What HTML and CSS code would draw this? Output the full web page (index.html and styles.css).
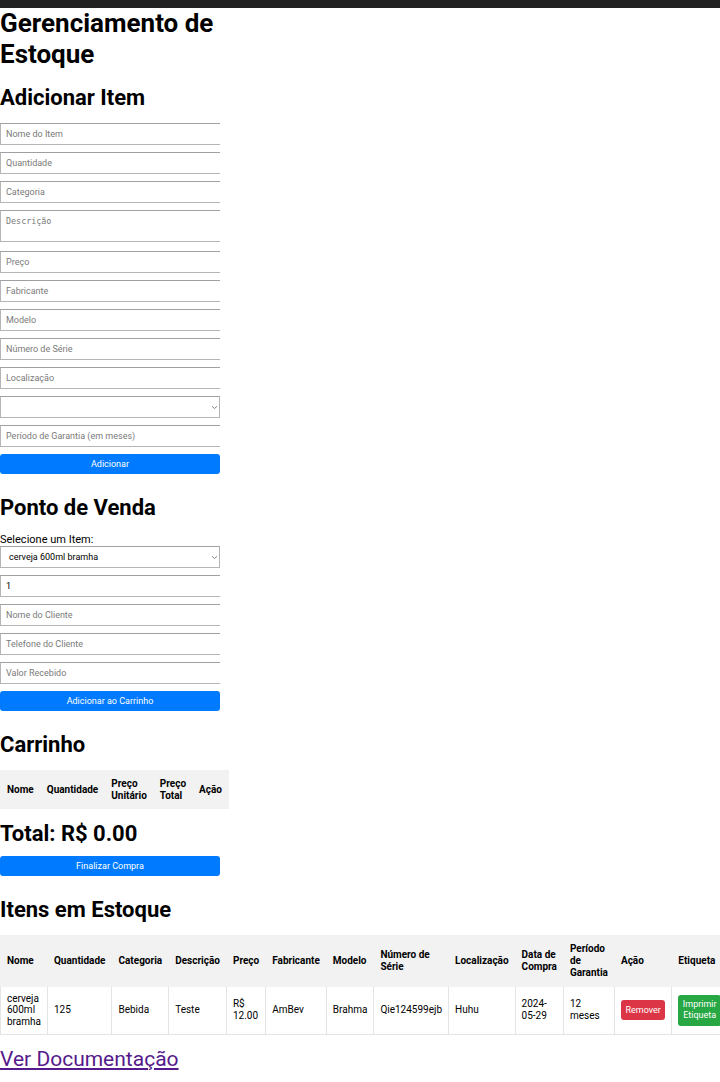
FILE: index.html
```html
<!DOCTYPE html>
<html lang="pt-BR">
<head>
<meta charset="utf-8">
<title>Gerenciamento de Estoque</title>
<link rel="stylesheet" href="styles.css">
</head>
<body>
<div class="topbar"></div>
<main class="page">
  <h1 class="title">Gerenciamento de<br>Estoque</h1>

  <h2 class="section">Adicionar Item</h2>
  <form class="form">
    <input class="field" type="text" placeholder="Nome do Item">
    <input class="field" type="text" placeholder="Quantidade">
    <input class="field" type="text" placeholder="Categoria">
    <textarea class="field area" placeholder="Descrição"></textarea>
    <input class="field" type="text" placeholder="Preço">
    <input class="field" type="text" placeholder="Fabricante">
    <input class="field" type="text" placeholder="Modelo">
    <input class="field" type="text" placeholder="Número de Série">
    <input class="field" type="text" placeholder="Localização">
    <div class="field select"><span class="select-text"></span><svg class="chev" width="7" height="5" viewBox="0 0 7 5"><path d="M1 1.2 L3.5 3.6 L6 1.2" fill="none" stroke="#777" stroke-width="0.9"/></svg></div>
    <input class="field" type="text" placeholder="Período de Garantia (em meses)">
    <button class="btn btn-blue" type="button">Adicionar</button>
  </form>

  <h2 class="section">Ponto de Venda</h2>
  <form class="form">
    <label class="label">Selecione um Item:</label>
    <div class="field select"><span class="select-text">cerveja 600ml bramha</span><svg class="chev" width="7" height="5" viewBox="0 0 7 5"><path d="M1 1.2 L3.5 3.6 L6 1.2" fill="none" stroke="#777" stroke-width="0.9"/></svg></div>
    <input class="field" type="text" value="1">
    <input class="field" type="text" placeholder="Nome do Cliente">
    <input class="field" type="text" placeholder="Telefone do Cliente">
    <input class="field" type="text" placeholder="Valor Recebido">
    <button class="btn btn-blue" type="button">Adicionar ao Carrinho</button>
  </form>

  <h2 class="section">Carrinho</h2>
  <table class="table cart">
    <thead>
      <tr><th>Nome</th><th>Quantidade</th><th>Preço<br>Unitário</th><th>Preço<br>Total</th><th>Ação</th></tr>
    </thead>
    <tbody></tbody>
  </table>
  <h2 class="section total">Total: R$ 0.00</h2>
  <button class="btn btn-blue" type="button">Finalizar Compra</button>

  <h2 class="section">Itens em Estoque</h2>
  <table class="table stock">
    <thead>
      <tr>
        <th>Nome</th><th>Quantidade</th><th>Categoria</th><th>Descrição</th><th>Preço</th><th>Fabricante</th><th>Modelo</th><th>Número de<br>Série</th><th>Localização</th><th>Data de<br>Compra</th><th>Período<br>de<br>Garantia</th><th>Ação</th><th>Etiqueta</th>
      </tr>
    </thead>
    <tbody>
      <tr>
        <td>cerveja<br>600ml<br>bramha</td><td>125</td><td>Bebida</td><td>Teste</td><td>R$<br>12.00</td><td>AmBev</td><td>Brahma</td><td>Qie124599ejb</td><td>Huhu</td><td>2024-<br>05-29</td><td>12<br>meses</td>
        <td><button class="btn-sm btn-red" type="button">Remover</button></td>
        <td><button class="btn-sm btn-green" type="button">Imprimir<br>Etiqueta</button></td>
      </tr>
    </tbody>
  </table>
  <a class="doc-link" href="#">Ver Documentação</a>
</main>
</body>
</html>
```

FILE: styles.css
```css
html, body {
  margin: 0;
  padding: 0;
  background: #fff;
}
body {
  font-family: Roboto, "Liberation Sans", sans-serif;
  color: #000;
}
.topbar {
  height: 8px;
  background: #222222;
}
.page {
  display: block;
}
.title {
  font-size: 26px;
  font-weight: 700;
  margin: 0 0 16px;
  line-height: 30.5px;
}
.section {
  font-size: 22px;
  font-weight: 700;
  margin: 0 0 12px;
  line-height: 26px;
}
.form {
  width: 220px;
  overflow: hidden;
  display: flex;
  flex-direction: column;
  margin-bottom: 21px;
}
.field {
  box-sizing: border-box;
  width: 232px;
  height: 22px;
  margin: 0 0 7px;
  padding: 0 5px;
  border: 1px solid #b5b5b5;
  border-top-color: #a0a0a0;
  font-family: Roboto, sans-serif;
  font-size: 9px;
  color: #000;
  background: #fff;
  flex: none;
  outline: none;
}
.field::placeholder {
  color: #7a7a7a;
}
.area {
  height: 32px;
  margin-bottom: 9px;
  padding: 5px 5px 3px;
  font-family: "DejaVu Sans Mono", monospace;
  font-size: 8.4px;
  resize: none;
}
.select {
  width: 220px;
  display: flex;
  align-items: center;
  justify-content: space-between;
  padding: 0 1px 0 8px;
}
.select-text {
  font-size: 9px;
}
.label {
  font-size: 11px;
  line-height: 13px;
  margin-bottom: 0;
}
.btn {
  display: block;
  width: 220px;
  height: 20px;
  border: 0;
  border-radius: 3px;
  font-family: Roboto, sans-serif;
  font-size: 9px;
  color: #fff;
  padding: 0;
  cursor: pointer;
}
.btn-blue {
  background: #007bff;
}
.table {
  border-collapse: collapse;
  font-size: 10px;
  margin-bottom: 16px;
}
.table th, .table td {
  border: 1px solid #e4e4e4;
  padding: 6px 6px;
  text-align: left;
  line-height: 11.7px;
}
.table th {
  background: #f2f2f2;
  border-color: #f2f2f2;
  font-weight: 700;
  padding: 7px 6px;
}
.cart {
  margin-bottom: 12px;
}
.total {
  margin-bottom: 9px;
}
.total + .btn {
  margin-bottom: 21px;
}
.stock {
  width: 720px;
  margin-bottom: 12px;
}
.btn-sm {
  border: 0;
  border-radius: 3px;
  color: #fff;
  font-family: Roboto, sans-serif;
  font-size: 9px;
  line-height: 11px;
  padding: 4.5px 4.5px;
}
.btn-red {
  background: #dc3545;
}
.btn-green {
  background: #28a745;
}
.doc-link {
  display: inline-block;
  font-size: 21px;
  color: #551a8b;
  line-height: 24px;
}
```
